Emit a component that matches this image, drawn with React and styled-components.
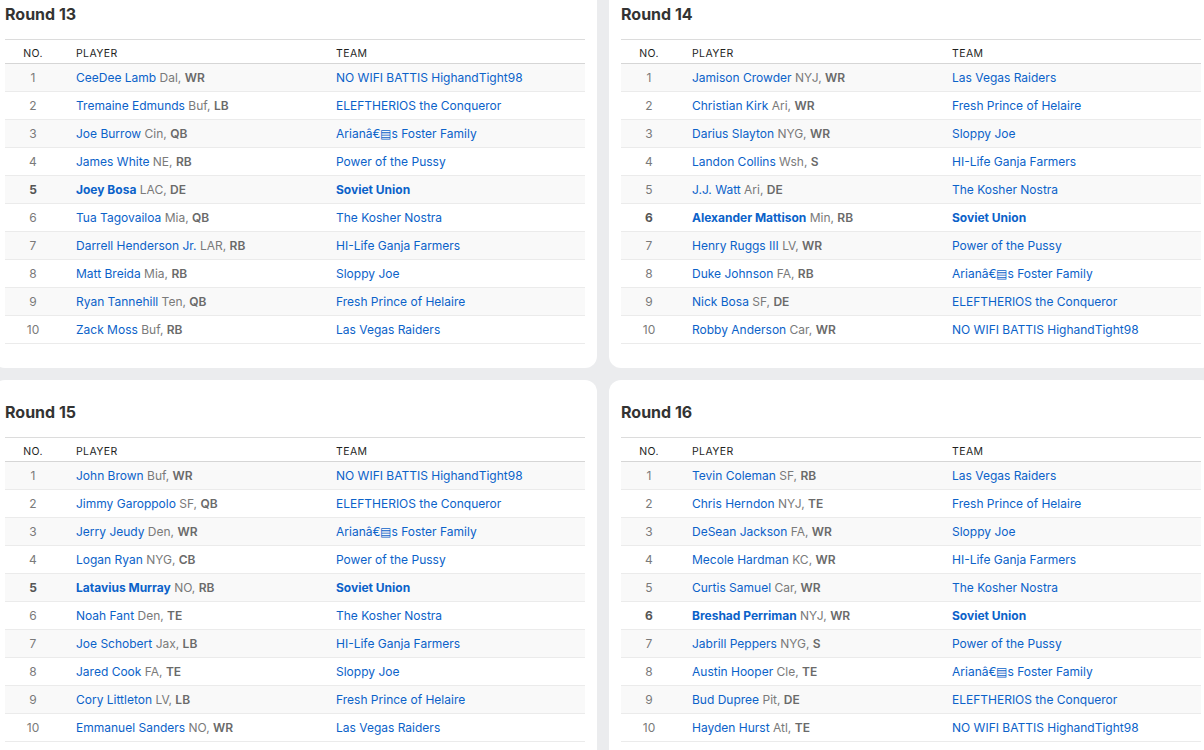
import React from "react"
import styled, { createGlobalStyle } from "styled-components"

const GlobalStyle = createGlobalStyle`
  html, body {
    margin: 0;
    padding: 0;
    overflow: hidden;
    background: #ebecee;
  }
  body {
    font-family: Inter, "Liberation Sans", sans-serif;
    -webkit-font-smoothing: antialiased;
  }
`

const ARIAN = "Arianâ€\u25A4s Foster Family"

const rounds = [
  {
    title: "Round 13",
    mine: 5,
    picks: [
      ["CeeDee Lamb", "Dal", "WR", "NO WIFI BATTIS HighandTight98"],
      ["Tremaine Edmunds", "Buf", "LB", "ELEFTHERIOS the Conqueror"],
      ["Joe Burrow", "Cin", "QB", ARIAN],
      ["James White", "NE", "RB", "Power of the Pussy"],
      ["Joey Bosa", "LAC", "DE", "Soviet Union"],
      ["Tua Tagovailoa", "Mia", "QB", "The Kosher Nostra"],
      ["Darrell Henderson Jr.", "LAR", "RB", "HI-Life Ganja Farmers"],
      ["Matt Breida", "Mia", "RB", "Sloppy Joe"],
      ["Ryan Tannehill", "Ten", "QB", "Fresh Prince of Helaire"],
      ["Zack Moss", "Buf", "RB", "Las Vegas Raiders"],
    ],
  },
  {
    title: "Round 14",
    mine: 6,
    picks: [
      ["Jamison Crowder", "NYJ", "WR", "Las Vegas Raiders"],
      ["Christian Kirk", "Ari", "WR", "Fresh Prince of Helaire"],
      ["Darius Slayton", "NYG", "WR", "Sloppy Joe"],
      ["Landon Collins", "Wsh", "S", "HI-Life Ganja Farmers"],
      ["J.J. Watt", "Ari", "DE", "The Kosher Nostra"],
      ["Alexander Mattison", "Min", "RB", "Soviet Union"],
      ["Henry Ruggs III", "LV", "WR", "Power of the Pussy"],
      ["Duke Johnson", "FA", "RB", ARIAN],
      ["Nick Bosa", "SF", "DE", "ELEFTHERIOS the Conqueror"],
      ["Robby Anderson", "Car", "WR", "NO WIFI BATTIS HighandTight98"],
    ],
  },
  {
    title: "Round 15",
    mine: 5,
    picks: [
      ["John Brown", "Buf", "WR", "NO WIFI BATTIS HighandTight98"],
      ["Jimmy Garoppolo", "SF", "QB", "ELEFTHERIOS the Conqueror"],
      ["Jerry Jeudy", "Den", "WR", ARIAN],
      ["Logan Ryan", "NYG", "CB", "Power of the Pussy"],
      ["Latavius Murray", "NO", "RB", "Soviet Union"],
      ["Noah Fant", "Den", "TE", "The Kosher Nostra"],
      ["Joe Schobert", "Jax", "LB", "HI-Life Ganja Farmers"],
      ["Jared Cook", "FA", "TE", "Sloppy Joe"],
      ["Cory Littleton", "LV", "LB", "Fresh Prince of Helaire"],
      ["Emmanuel Sanders", "NO", "WR", "Las Vegas Raiders"],
    ],
  },
  {
    title: "Round 16",
    mine: 6,
    picks: [
      ["Tevin Coleman", "SF", "RB", "Las Vegas Raiders"],
      ["Chris Herndon", "NYJ", "TE", "Fresh Prince of Helaire"],
      ["DeSean Jackson", "FA", "WR", "Sloppy Joe"],
      ["Mecole Hardman", "KC", "WR", "HI-Life Ganja Farmers"],
      ["Curtis Samuel", "Car", "WR", "The Kosher Nostra"],
      ["Breshad Perriman", "NYJ", "WR", "Soviet Union"],
      ["Jabrill Peppers", "NYG", "S", "Power of the Pussy"],
      ["Austin Hooper", "Cle", "TE", ARIAN],
      ["Bud Dupree", "Pit", "DE", "ELEFTHERIOS the Conqueror"],
      ["Hayden Hurst", "Atl", "TE", "NO WIFI BATTIS HighandTight98"],
    ],
  },
]

const RoundCard = ({ round }) => (
  <Card>
    <Title>{round.title}</Title>
    <Table>
      <colgroup>
        <col width="56" />
        <col width="260" />
        <col />
      </colgroup>
      <thead>
        <tr>
          <HeadCell center>NO.</HeadCell>
          <HeadCell>PLAYER</HeadCell>
          <HeadCell>TEAM</HeadCell>
        </tr>
      </thead>
      <tbody>
        {round.picks.map(([name, club, pos, team], i) => {
          const mine = i + 1 === round.mine
          return (
            <Row key={i}>
              <NumCell mine={mine}>{i + 1}</NumCell>
              <Cell>
                <Link bold={mine}>{name}</Link> <Meta>{club}, <Pos>{pos}</Pos></Meta>
              </Cell>
              <Cell>
                <Link bold={mine}>{team}</Link>
              </Cell>
            </Row>
          )
        })}
      </tbody>
    </Table>
  </Card>
)

const App = () => (
  <>
    <GlobalStyle />
    <Grid>
      {rounds.map((r) => (
        <RoundCard key={r.title} round={r} />
      ))}
    </Grid>
  </>
)

const Grid = styled.div`
  display: grid;
  grid-template-columns: 604px 604px;
  gap: 12px;
  width: 1220px;
  margin: -18px 0 0 -7px;
`

const Card = styled.div`
  background: #fff;
  border-radius: 12px;
  padding: 0 12px 24px;
`

const Title = styled.h2`
  margin: 0;
  padding-top: 20px;
  margin-bottom: 13px;
  font-size: 16px;
  line-height: 24px;
  font-weight: 700;
  color: #333;
`

const Table = styled.table`
  width: 100%;
  border-collapse: collapse;
  table-layout: fixed;
  font-size: 12px;
`

const HeadCell = styled.th`
  height: 20px;
  padding: 3px 0 0 ${(p) => (p.center ? "0" : "15px")};
  vertical-align: middle;
  text-align: ${(p) => (p.center ? "center" : "left")};
  font-size: 10.5px;
  font-weight: 400;
  letter-spacing: 0.4px;
  color: #1f1f1f;
  border-top: 1px solid #dcdcdc;
  border-bottom: 1px solid #d6d6d6;
`

const Row = styled.tr`
  &:nth-child(odd) {
    background: #f9f9f9;
  }
`

const Cell = styled.td`
  height: 27px;
  padding: 0 0 0 15px;
  border-bottom: 1px solid #ebebeb;
  white-space: nowrap;
  color: #777;
`

const NumCell = styled(Cell)`
  padding: 0;
  text-align: center;
  font-weight: ${(p) => (p.mine ? 700 : 400)};
  color: ${(p) => (p.mine ? "#555" : "#7a7a7a")};
`

const Link = styled.a`
  color: #0b62c9;
  text-decoration: none;
  font-weight: ${(p) => (p.bold ? 700 : 400)};
  cursor: pointer;
`

const Meta = styled.span`
  color: #7a7a7a;
`

const Pos = styled.b`
  font-weight: 600;
  color: #6a6a6a;
`

export default App
